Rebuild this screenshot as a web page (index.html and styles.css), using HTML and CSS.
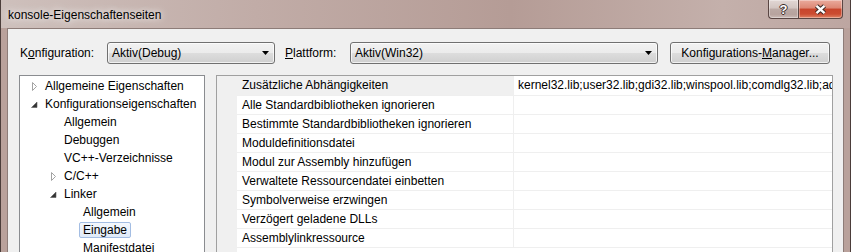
FILE: index.html
```html
<!DOCTYPE html>
<html lang="de">
<head>
    <meta charset="UTF-8">
    <title>konsole-Eigenschaftenseiten</title>
    <link rel="stylesheet" href="styles.css">
</head>
<body>
    <div class="window">
        <div class="titlebar">
            <span class="title">konsole-Eigenschaftenseiten</span>
            <div class="caption_buttons">
                <span class="cap_btn help">?</span>
                <span class="cap_btn close">
                    <svg width="13" height="11" viewBox="0 0 13 11">
                        <path d="M2.5 1.8 L10.5 9.2 M10.5 1.8 L2.5 9.2" stroke="#3b2a27" stroke-width="4.4" fill="none"/>
                        <path d="M2.5 1.8 L10.5 9.2 M10.5 1.8 L2.5 9.2" stroke="#ffffff" stroke-width="2.4" fill="none"/>
                    </svg>
                </span>
            </div>
        </div>
        <div class="client">
            <div class="toolbar">
                <span class="field_label label_config">K<u>o</u>nfiguration:</span>
                <div class="combo combo_config">
                    <span class="combo_text">Aktiv(Debug)</span>
                    <svg class="combo_arrow" width="7" height="4" viewBox="0 0 7 4"><polygon points="0,0 7,0 3.5,4" fill="#000"/></svg>
                </div>
                <span class="field_label label_platform"><u>P</u>lattform:</span>
                <div class="combo combo_platform">
                    <span class="combo_text">Aktiv(Win32)</span>
                    <svg class="combo_arrow" width="7" height="4" viewBox="0 0 7 4"><polygon points="0,0 7,0 3.5,4" fill="#000"/></svg>
                </div>
                <button class="btn">Konfigurations-<u>M</u>anager...</button>
            </div>
            <div class="panes">
                <ul class="tree">
                    <li class="tree_row level_0">
                        <span class="expander"><svg width="14" height="18" viewBox="0 0 14 18"><polygon points="1.5,5.5 5.5,9.5 1.5,13.5" fill="#fff" stroke="#a3a3a3"/></svg></span>
                        <span class="tree_label">Allgemeine Eigenschaften</span>
                    </li>
                    <li class="tree_row level_0">
                        <span class="expander"><svg width="14" height="18" viewBox="0 0 14 18"><polygon points="6,7 6,12.5 0.5,12.5" fill="#333" stroke="#5a5a5a" stroke-width="0.6"/></svg></span>
                        <span class="tree_label">Konfigurationseigenschaften</span>
                    </li>
                    <li class="tree_row level_1">
                        <span class="expander"></span>
                        <span class="tree_label">Allgemein</span>
                    </li>
                    <li class="tree_row level_1">
                        <span class="expander"></span>
                        <span class="tree_label">Debuggen</span>
                    </li>
                    <li class="tree_row level_1">
                        <span class="expander"></span>
                        <span class="tree_label">VC++-Verzeichnisse</span>
                    </li>
                    <li class="tree_row level_1">
                        <span class="expander"><svg width="14" height="18" viewBox="0 0 14 18"><polygon points="1.5,5.5 5.5,9.5 1.5,13.5" fill="#fff" stroke="#a3a3a3"/></svg></span>
                        <span class="tree_label">C/C++</span>
                    </li>
                    <li class="tree_row level_1">
                        <span class="expander"><svg width="14" height="18" viewBox="0 0 14 18"><polygon points="6,7 6,12.5 0.5,12.5" fill="#333" stroke="#5a5a5a" stroke-width="0.6"/></svg></span>
                        <span class="tree_label">Linker</span>
                    </li>
                    <li class="tree_row level_2">
                        <span class="expander"></span>
                        <span class="tree_label">Allgemein</span>
                    </li>
                    <li class="tree_row level_2">
                        <span class="expander"></span>
                        <span class="tree_label selected">Eingabe</span>
                    </li>
                    <li class="tree_row level_2">
                        <span class="expander"></span>
                        <span class="tree_label">Manifestdatei</span>
                    </li>
                </ul>
                <div class="props">
                    <div class="props_margin"></div>
                    <div class="props_rows">
                        <div class="prop_row first">
                            <span class="prop_name">Zusätzliche Abhängigkeiten</span>
                            <span class="prop_value">kernel32.lib;user32.lib;gdi32.lib;winspool.lib;comdlg32.lib;advapi32.lib;shell32.lib;ole32.lib;oleaut32.lib;uuid.lib;odbc32.lib;odbccp32.lib;%(AdditionalDependencies)</span>
                        </div>
                        <div class="prop_row">
                            <span class="prop_name">Alle Standardbibliotheken ignorieren</span>
                            <span class="prop_value"></span>
                        </div>
                        <div class="prop_row">
                            <span class="prop_name">Bestimmte Standardbibliotheken ignorieren</span>
                            <span class="prop_value"></span>
                        </div>
                        <div class="prop_row">
                            <span class="prop_name">Moduldefinitionsdatei</span>
                            <span class="prop_value"></span>
                        </div>
                        <div class="prop_row">
                            <span class="prop_name">Modul zur Assembly hinzufügen</span>
                            <span class="prop_value"></span>
                        </div>
                        <div class="prop_row">
                            <span class="prop_name">Verwaltete Ressourcendatei einbetten</span>
                            <span class="prop_value"></span>
                        </div>
                        <div class="prop_row">
                            <span class="prop_name">Symbolverweise erzwingen</span>
                            <span class="prop_value"></span>
                        </div>
                        <div class="prop_row">
                            <span class="prop_name">Verzögert geladene DLLs</span>
                            <span class="prop_value"></span>
                        </div>
                        <div class="prop_row">
                            <span class="prop_name">Assemblylinkressource</span>
                            <span class="prop_value"></span>
                        </div>
                    </div>
                </div>
            </div>
        </div>
    </div>
</body>
</html>
```

FILE: styles.css
```css
body {
    margin: 0;
    width: 851px;
    height: 252px;
    overflow: hidden;
    font-family: "Liberation Sans", Arial, sans-serif;
    font-size: 12px;
    color: #000;
}
.window {
    box-sizing: border-box;
    width: 851px;
    height: 252px;
    border-left: 1px solid #4b3d3a;
    border-right: 1px solid #4b3d3a;
    background: #b9a19b;
    display: flex;
    flex-direction: column;
}
.titlebar {
    height: 28px;
    flex-shrink: 0;
    display: flex;
    align-items: flex-start;
    padding-left: 7px;
    background: linear-gradient(to right, #cec0bc 0%, #c1aca7 30%, #b59c96 60%, #c4b0ab 85%, #bda6a1 100%);
}
.title {
    margin-top: 7px;
    line-height: 16px;
    color: #000;
    text-shadow: 0 0 6px rgba(255, 255, 255, 0.9), 0 0 12px rgba(255, 255, 255, 0.7);
}
.caption_buttons {
    margin-left: auto;
    margin-right: 7px;
    display: flex;
}
.cap_btn {
    box-sizing: border-box;
    height: 19px;
    display: flex;
    align-items: center;
    justify-content: center;
    border: 1px solid #5a4643;
    border-top: none;
    box-shadow: inset 0 0 0 1px rgba(255, 255, 255, 0.35);
}
.help {
    width: 30px;
    border-right: none;
    border-bottom-left-radius: 4px;
    background: linear-gradient(#e2d7d4 0%, #d2c5c1 45%, #bba9a4 50%, #b7a39e 80%, #cbbab5 100%);
    color: #fff;
    font-weight: bold;
    font-size: 13px;
    text-shadow: 1px 0 #3b2a27, -1px 0 #3b2a27, 0 1px #3b2a27, 0 -1px #3b2a27;
}
.close {
    width: 45px;
    border-bottom-right-radius: 4px;
    background: linear-gradient(#eaab9d 0%, #dd8673 45%, #c8452c 50%, #cb4c31 78%, #e08465 100%);
}
.client {
    flex: 1;
    margin: 0 6px;
    border: 1px solid #8d7c78;
    border-bottom: none;
    background: #f0f0f0;
    overflow: hidden;
}
.toolbar {
    display: flex;
    align-items: center;
    height: 22px;
    margin-top: 13px;
    padding-left: 12px;
}
.field_label {
    flex-shrink: 0;
}
.label_config {
    width: 87px;
}
.label_platform {
    width: 65px;
    margin-left: 10px;
}
.combo,
.btn {
    box-sizing: border-box;
    height: 22px;
    border: 1px solid #707070;
    border-radius: 3px;
    background: linear-gradient(#f2f2f2 0%, #ebebeb 50%, #dddddd 50%, #cfcfcf 100%);
    box-shadow: inset 0 0 0 1px rgba(255, 255, 255, 0.7);
}
.combo {
    display: flex;
    align-items: center;
    padding: 0 5px 0 4px;
}
.combo_config {
    width: 168px;
}
.combo_platform {
    width: 308px;
}
.combo_text {
    flex: 1;
}
.combo_arrow {
    display: block;
}
.btn {
    width: 160px;
    margin-left: 12px;
    padding: 0;
    font-family: inherit;
    font-size: 12px;
    color: #000;
}
.panes {
    display: flex;
    margin-top: 11px;
    padding-left: 11px;
    gap: 11px;
}
.tree {
    box-sizing: border-box;
    width: 186px;
    height: 200px;
    margin: 0;
    padding: 1px 0 0;
    list-style: none;
    border: 1px solid #8a8c90;
    background: #fff;
}
.tree_row {
    display: flex;
    align-items: center;
    height: 18px;
    white-space: nowrap;
}
.level_0 {
    padding-left: 11px;
}
.level_1 {
    padding-left: 30px;
}
.level_2 {
    padding-left: 49px;
}
.expander {
    width: 14px;
    height: 18px;
    flex-shrink: 0;
}
.expander svg {
    display: block;
}
.tree_label {
    box-sizing: border-box;
    height: 16px;
    line-height: 14px;
    margin-left: -4px;
    padding: 0 3px;
    border: 1px solid transparent;
    border-radius: 2px;
}
.tree_label.selected {
    border-color: #a3bde3;
    background: linear-gradient(#f4f8fd, #dfeaf8);
}
.props {
    box-sizing: border-box;
    width: 617px;
    height: 200px;
    display: flex;
    border: 1px solid #a0a0a0;
    background: #fff;
}
.props_margin {
    width: 20px;
    flex-shrink: 0;
    background: #f0f0f0;
}
.props_rows {
    flex: 1;
    min-width: 0;
}
.prop_row {
    display: flex;
    height: 19px;
    box-sizing: border-box;
    border-bottom: 1px solid #efefef;
    line-height: 18px;
}
.prop_row.first {
    height: 20px;
    line-height: 19px;
}
.prop_row.first .prop_name {
    background: #f0f0f0;
}
.prop_name {
    box-sizing: border-box;
    width: 277px;
    flex-shrink: 0;
    padding-left: 5px;
    border-right: 1px solid #efefef;
    white-space: nowrap;
}
.prop_value {
    flex: 1;
    min-width: 0;
    padding-left: 4px;
    white-space: nowrap;
    overflow: hidden;
}
```
